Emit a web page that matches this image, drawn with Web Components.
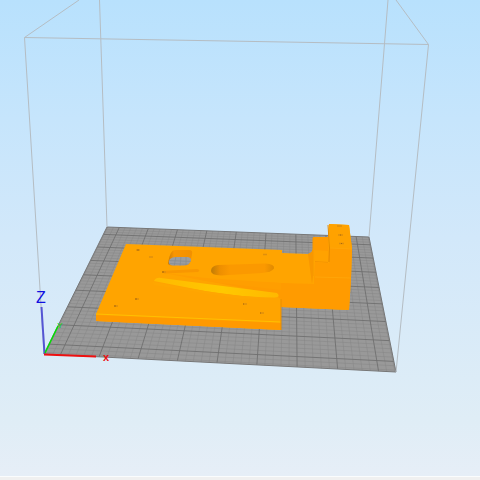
<!DOCTYPE html>
<html lang="en">
<head>
<meta charset="utf-8">
<title>3D view</title>
<style>
body { margin: 0; font-family: "Liberation Sans", Arial, sans-serif; }
</style>
</head>
<body>
<view-port><build-plate slot="scene"></build-plate></view-port>
<script>
customElements.define('view-port', class extends HTMLElement {
  constructor() {
    super();
    this.attachShadow({ mode: 'open' }).innerHTML = `
      <style>
        :host { display: flex; flex-direction: column; min-height: 100vh; }
        main { flex: 1; overflow: hidden; background: linear-gradient(#b8e1fd, #c6e5fc 25%, #d2e8fa 50%, #dfedf6 88%, #e6eef7); }
        footer { height: 3px; background: #f0f0f0; border-top: 1px solid #fafcfd; }
      </style>
      <main><slot name="scene"></slot></main><footer></footer>`;
  }
});

// Maps the unit square onto a quadrilateral given as four corners.
function projector([[x0, y0], [x1, y1], [x2, y2], [x3, y3]]) {
  const dx1 = x1 - x2, dx2 = x3 - x2, sx = x0 - x1 + x2 - x3;
  const dy1 = y1 - y2, dy2 = y3 - y2, sy = y0 - y1 + y2 - y3;
  const den = dx1 * dy2 - dx2 * dy1;
  const g = (sx * dy2 - dx2 * sy) / den, h = (dx1 * sy - sx * dy1) / den;
  return (u, v) => {
    const w = g * u + h * v + 1;
    return [((x1 - x0 + g * x1) * u + (x3 - x0 + h * x3) * v + x0) / w,
            ((y1 - y0 + g * y1) * u + (y3 - y0 + h * y3) * v + y0) / w].map(n => n.toFixed(2));
  };
}

function gridPaths() {
  const at = projector([[44, 354], [396, 372], [369, 237], [107, 227]]);
  let minor = '', major = '';
  const add = (i, a, b) => {
    const d = `M${a.join()}L${b.join()}`;
    if (i % 5 === 0) major += d; else minor += d;
  };
  for (let i = -22; i <= 22; i++) {
    const u = 0.5 + i / 5 / 8.85;
    add(i, at(u, 0), at(u, 1));
  }
  for (let i = -2; i <= 37; i++) {
    const v = (i / 5 + 0.48) / 8.1;
    if (v > 0 && v < 1) add(i, at(0, v), at(1, v));
  }
  return `<path d="${minor}" stroke="#858585" stroke-width="1" opacity=".5"/><path d="${major}" stroke="#6d6d6d" stroke-width="1" opacity=".85"/>`;
}

customElements.define('build-plate', class extends HTMLElement {
  constructor() {
    super();
    this.attachShadow({ mode: 'open' }).innerHTML = `
      <style>
        :host { display: block; }
        svg { display: block; width: 100%; height: auto; }
        text { font-family: "Liberation Sans", Arial, sans-serif; }
      </style>
      <svg viewBox="0 0 480 476" fill="none" role="img" aria-label="Model on build plate">
        <defs>
          <linearGradient id="slot"><stop stop-color="#c07c06"/><stop offset=".14" stop-color="#ee8f00"/><stop offset=".3" stop-color="#fb9900"/><stop offset=".85" stop-color="#fb9900"/><stop offset="1" stop-color="#e08a00"/></linearGradient>
          <linearGradient id="ridge"><stop stop-color="#ffb900"/><stop offset=".55" stop-color="#ffc800"/><stop offset="1" stop-color="#ffb800"/></linearGradient>
          <linearGradient id="hole"><stop stop-color="#c97a04"/><stop offset=".25" stop-color="#fa9600"/><stop offset="1" stop-color="#f29000"/></linearGradient>
          <clipPath id="opening"><path d="M169 264Q168 261 170 259Q172 257 176 257H188Q191 257.500 191 260Q190 265 184 265.500H172Z"/></clipPath>
        </defs>
        <path d="M44 354 396 372 369 237 107 227Z" fill="#999"/>
        ${gridPaths()}
        <path d="M44 354 107 227 369 237 396 372Z" stroke="#777"/>
        <g stroke="#b5bdc3">
          <path d="M44 354 24.500 37.500 428.500 44.500 396 372M24.500 37.500 79 0M428.500 44.500 396 0M99.500 0 107 227M388 0 369 237"/>
        </g>
        <path d="M126 244 282 250V253L308 254Q312 253 313 249V237H328L329 224 349 225 352 248 351 278 349 310 281 307V330L96 321V314Z" fill="#ffa400"/>
        <path d="M202 280 281 283 314 284V277L351 278 349 310 281 307V299Q276 297 279 295Z" fill="#ff9b00"/>
        <path d="M96 315 281 323V330L96 321Z" fill="#ff9900"/>
        <path d="M96 314 281 322" stroke="#ffc000" stroke-width="1"/>
        <path d="M281 299V330" stroke="#e98e00"/>
        <path d="M164 273 206 278 281 283V290L205 281Z" fill="#ff9e00"/>
        <path d="M154 281Q156 277 161 278L277 293Q281 297 275 297.500Q250 298 205 291Z" fill="url(#ridge)"/>
        <path d="M153 282 205 291Q240 297 274 298L240 299 154 285Z" fill="#ffa600"/>
        <path d="M162 271 197 269Q201 270 198 272L164 273.500Z" fill="#f99700"/>
        <path d="M168 263Q170 250 175 250H189Q193 250 192 254L191 260Q190 265.500 184 265.500H172Q168 265.500 168 263Z" fill="url(#hole)"/>
        <g clip-path="url(#opening)">
          <path d="M168 255H193V267H168Z" fill="#9b9da0"/>
          <path d="M168 260.500 192 261.500M168 263.500 192 264.500M176 256 174 267M181 256 180 267M186 256 186 267" stroke="#868b90" opacity=".7"/>
        </g>
        <path d="M218 265 265 263.500Q275 264 274 268.500Q272 272 262 273L221 275.500Q211 275 211 271Q211 266 218 265Z" fill="url(#slot)"/>
        <path d="M313 237 328 237 329 262 315 261Z" fill="#ff9b00"/>
        <path d="M314 250 328 251V262L315 261Z" fill="#ffa200"/>
        <path d="M313 238V276M315 261.500 328 262.500" stroke="#f59500"/>
        <path d="M308 254Q312 253 313 249V277L312 284Z" fill="#f89700"/>
        <path d="M315 262 329 263 330 248 352 249 351 278 314 277Z" fill="#ff9c00"/>
        <path d="M328 225 329.500 248 329 262" stroke="#e58b00"/>
        <path d="M329 224 349 225 352 249 330 248Z" fill="#ffa200"/>
        <path d="M330 248 352 249M315 277 351 278" stroke="#ffa508"/>
        <g stroke="#e08f0c" stroke-width="1.500">
          <path d="M136 250h4M149 257h4M135 299h4M114 306h4M162 272h4M243 304h4M260 313h4M263 254.500h4"/>
          <path d="M337 226h5M338 235h5M339 243.500h5"/>
        </g>
        <g stroke="#a8680c"><path d="M137 250h2M135 299h2M114 306h2M162 272h2M243 304h1M260 313h1M340 235h1M341 243.500h1"/></g>
        <path d="M44.500 354 41.500 307" stroke="#5555d4" stroke-width="2"/>
        <path d="M45 353 58 326" stroke="#00e000" stroke-width="1.500"/>
        <path d="M44 354.500 96 356.500" stroke="#ee1010" stroke-width="2"/>
        <text x="41" y="303" text-anchor="middle" font-size="16" fill="#1010e0">Z</text>
        <text x="60" y="328" text-anchor="middle" font-size="8" fill="#00e000">Y</text>
        <text x="106" y="361" text-anchor="middle" font-size="11" font-weight="bold" fill="#ee1010">x</text>
      </svg>`;
  }
});
</script>
</body>
</html>
